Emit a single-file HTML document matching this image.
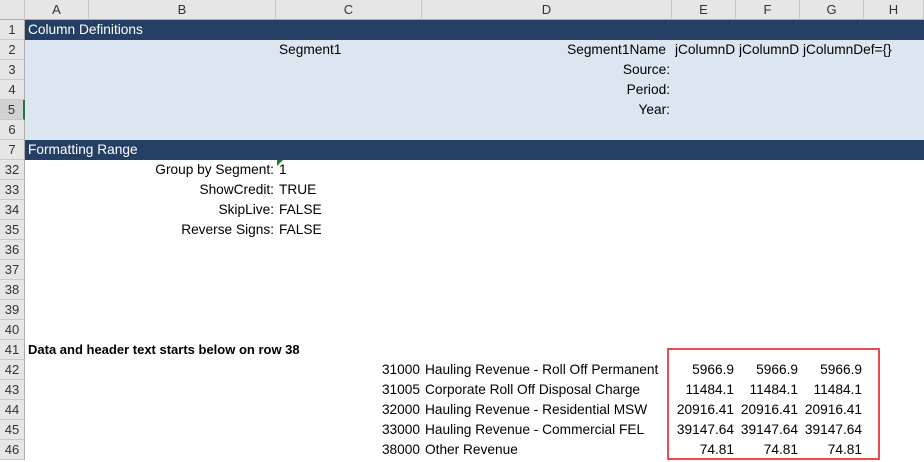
<!DOCTYPE html>
<html><head><style>
*{margin:0;padding:0;box-sizing:border-box}
body{width:924px;height:462px;overflow:hidden;background:#fff;font-family:"Liberation Sans",Arial,sans-serif;font-size:13.7px;color:#000;position:relative}
.a{position:absolute;white-space:nowrap;line-height:20px}
.r{text-align:right}
.hdr{position:absolute;top:0;height:20px;background:#e6e6e6;border-right:1px solid #c8c8c8;border-bottom:1px solid #ababab;text-align:center;line-height:20px;color:#333;font-size:13px}
.rh{position:absolute;left:0;width:25px;height:20px;background:#e6e6e6;border-bottom:1px solid #c8c8c8;border-right:1px solid #ababab;text-align:center;line-height:20px;color:#333;font-size:13px}
.band{position:absolute;left:25px;width:899px;height:20px;background:#243f63;color:#fff;line-height:20px;padding-left:3px}
.light{position:absolute;left:25px;top:40px;width:899px;height:100px;background:#dce6f1}
</style></head><body>
<div class="hdr" style="left:0;width:25px"></div>
<div class="hdr" style="left:25px;width:64px">A</div>
<div class="hdr" style="left:89px;width:187px">B</div>
<div class="hdr" style="left:276px;width:146px">C</div>
<div class="hdr" style="left:422px;width:250px">D</div>
<div class="hdr" style="left:672px;width:64px">E</div>
<div class="hdr" style="left:736px;width:64px">F</div>
<div class="hdr" style="left:800px;width:64px">G</div>
<div class="hdr" style="left:864px;width:60px">H</div>

<div class="band" style="top:20px">Column Definitions</div>
<div class="light"></div>
<div class="band" style="top:140px">Formatting Range</div>

<div class="rh" style="top:20px">1</div>
<div class="rh" style="top:40px">2</div>
<div class="rh" style="top:60px">3</div>
<div class="rh" style="top:80px">4</div>
<div class="rh" style="top:100px;background:#d2d2d2;border-right:2px solid #217346">5</div>
<div class="rh" style="top:120px">6</div>
<div class="rh" style="top:140px">7</div>
<div class="rh" style="top:160px">32</div>
<div class="rh" style="top:180px">33</div>
<div class="rh" style="top:200px">34</div>
<div class="rh" style="top:220px">35</div>
<div class="rh" style="top:240px">36</div>
<div class="rh" style="top:260px">37</div>
<div class="rh" style="top:280px">38</div>
<div class="rh" style="top:300px">39</div>
<div class="rh" style="top:320px">40</div>
<div class="rh" style="top:340px">41</div>
<div class="rh" style="top:360px">42</div>
<div class="rh" style="top:380px">43</div>
<div class="rh" style="top:400px">44</div>
<div class="rh" style="top:420px">45</div>
<div class="rh" style="top:440px">46</div>

<div class="a" style="left:279px;top:40px">Segment1</div>
<div class="a r" style="left:422px;width:244px;top:40px">Segment1Name</div>
<div class="a" style="left:675px;top:40px;width:61px;overflow:hidden">jColumnD</div>
<div class="a" style="left:739px;top:40px;width:61px;overflow:hidden">jColumnD</div>
<div class="a" style="left:803px;top:40px">jColumnDef={}</div>
<div class="a r" style="left:422px;width:248px;top:60px">Source:</div>
<div class="a r" style="left:422px;width:248px;top:80px">Period:</div>
<div class="a r" style="left:422px;width:248px;top:100px">Year:</div>

<div style="position:absolute;left:277px;top:160px;width:0;height:0;border-top:6px solid #1e7b34;border-right:6px solid transparent"></div>
<div class="a r" style="left:89px;width:185px;top:160px">Group by Segment:</div>
<div class="a" style="left:279px;top:160px">1</div>
<div class="a r" style="left:89px;width:185px;top:180px">ShowCredit:</div>
<div class="a" style="left:279px;top:180px">TRUE</div>
<div class="a r" style="left:89px;width:185px;top:200px">SkipLive:</div>
<div class="a" style="left:279px;top:200px">FALSE</div>
<div class="a r" style="left:89px;width:185px;top:220px">Reverse Signs:</div>
<div class="a" style="left:279px;top:220px">FALSE</div>

<div class="a" style="left:28px;top:340px;font-weight:bold;font-size:13px">Data and header text starts below on row 38</div>

<div class="a r" style="left:340px;width:80px;top:360px">31000</div>
<div class="a" style="left:425px;top:360px">Hauling Revenue - Roll Off Permanent</div>
<div class="a r" style="left:340px;width:80px;top:380px">31005</div>
<div class="a" style="left:425px;top:380px">Corporate Roll Off Disposal Charge</div>
<div class="a r" style="left:340px;width:80px;top:400px">32000</div>
<div class="a" style="left:425px;top:400px">Hauling Revenue - Residential MSW</div>
<div class="a r" style="left:340px;width:80px;top:420px">33000</div>
<div class="a" style="left:425px;top:420px">Hauling Revenue - Commercial FEL</div>
<div class="a r" style="left:340px;width:80px;top:440px">38000</div>
<div class="a" style="left:425px;top:440px">Other Revenue</div>

<div class="a r" style="left:672px;width:62px;top:360px">5966.9</div>
<div class="a r" style="left:736px;width:62px;top:360px">5966.9</div>
<div class="a r" style="left:800px;width:62px;top:360px">5966.9</div>
<div class="a r" style="left:672px;width:62px;top:380px">11484.1</div>
<div class="a r" style="left:736px;width:62px;top:380px">11484.1</div>
<div class="a r" style="left:800px;width:62px;top:380px">11484.1</div>
<div class="a r" style="left:662px;width:72px;top:400px">20916.41</div>
<div class="a r" style="left:736px;width:62px;top:400px">20916.41</div>
<div class="a r" style="left:800px;width:62px;top:400px">20916.41</div>
<div class="a r" style="left:662px;width:72px;top:420px">39147.64</div>
<div class="a r" style="left:736px;width:62px;top:420px">39147.64</div>
<div class="a r" style="left:800px;width:62px;top:420px">39147.64</div>
<div class="a r" style="left:672px;width:62px;top:440px">74.81</div>
<div class="a r" style="left:736px;width:62px;top:440px">74.81</div>
<div class="a r" style="left:800px;width:62px;top:440px">74.81</div>

<div style="position:absolute;left:667px;top:348px;width:213px;height:112px;border:2px solid #e84a4f"></div>
</body></html>
